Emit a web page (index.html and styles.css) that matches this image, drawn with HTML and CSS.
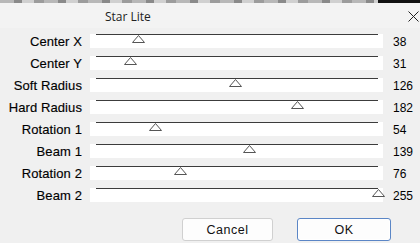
FILE: index.html
```html
<!DOCTYPE html>
<html>
<head>
<meta charset="utf-8">
<link rel="stylesheet" href="styles.css">
</head>
<body>
<div class="strip"><div class="strip-dark"></div></div>
<div class="dialog">
  <div class="titlebar">
    <span class="title">Star Lite</span>
    <svg class="close" width="11" height="11" viewBox="0 0 11 11"><path d="M0.5 0.5 L10.5 10.5 M10.5 0.5 L0.5 10.5" stroke="#222" stroke-width="1"/></svg>
  </div>
  <div class="rows">
    <div class="row"><span class="label">Center X</span><div class="track"><div class="line"></div><svg class="thumb" style="left:calc(6px + 282px * 38 / 255 - 6.5px)" width="13" height="9" viewBox="0 0 13 9"><path d="M6.5 0.5 L12.5 7.5 L0.5 7.5 Z" fill="#fff" stroke="#555"/></svg></div><span class="value">38</span></div>
    <div class="row"><span class="label">Center Y</span><div class="track"><div class="line"></div><svg class="thumb" style="left:calc(6px + 282px * 31 / 255 - 6.5px)" width="13" height="9" viewBox="0 0 13 9"><path d="M6.5 0.5 L12.5 7.5 L0.5 7.5 Z" fill="#fff" stroke="#555"/></svg></div><span class="value">31</span></div>
    <div class="row"><span class="label">Soft Radius</span><div class="track"><div class="line"></div><svg class="thumb" style="left:calc(6px + 282px * 126 / 255 - 6.5px)" width="13" height="9" viewBox="0 0 13 9"><path d="M6.5 0.5 L12.5 7.5 L0.5 7.5 Z" fill="#fff" stroke="#555"/></svg></div><span class="value">126</span></div>
    <div class="row"><span class="label">Hard Radius</span><div class="track"><div class="line"></div><svg class="thumb" style="left:calc(6px + 282px * 182 / 255 - 6.5px)" width="13" height="9" viewBox="0 0 13 9"><path d="M6.5 0.5 L12.5 7.5 L0.5 7.5 Z" fill="#fff" stroke="#555"/></svg></div><span class="value">182</span></div>
    <div class="row"><span class="label">Rotation 1</span><div class="track"><div class="line"></div><svg class="thumb" style="left:calc(6px + 282px * 54 / 255 - 6.5px)" width="13" height="9" viewBox="0 0 13 9"><path d="M6.5 0.5 L12.5 7.5 L0.5 7.5 Z" fill="#fff" stroke="#555"/></svg></div><span class="value">54</span></div>
    <div class="row"><span class="label">Beam 1</span><div class="track"><div class="line"></div><svg class="thumb" style="left:calc(6px + 282px * 139 / 255 - 6.5px)" width="13" height="9" viewBox="0 0 13 9"><path d="M6.5 0.5 L12.5 7.5 L0.5 7.5 Z" fill="#fff" stroke="#555"/></svg></div><span class="value">139</span></div>
    <div class="row"><span class="label">Rotation 2</span><div class="track"><div class="line"></div><svg class="thumb" style="left:calc(6px + 282px * 76 / 255 - 6.5px)" width="13" height="9" viewBox="0 0 13 9"><path d="M6.5 0.5 L12.5 7.5 L0.5 7.5 Z" fill="#fff" stroke="#555"/></svg></div><span class="value">76</span></div>
    <div class="row"><span class="label">Beam 2</span><div class="track"><div class="line"></div><svg class="thumb" style="left:calc(6px + 282px * 255 / 255 - 6.5px)" width="13" height="9" viewBox="0 0 13 9"><path d="M6.5 0.5 L12.5 7.5 L0.5 7.5 Z" fill="#fff" stroke="#555"/></svg></div><span class="value">255</span></div>
  </div>
  <div class="buttons">
    <button class="btn">Cancel</button>
    <button class="btn btn-default">OK</button>
  </div>
</div>
</body>
</html>
```
FILE: styles.css
```css
html, body {
  margin: 0;
  padding: 0;
  background: #f0f0f0;
  width: 420px;
  height: 243px;
  overflow: hidden;
}
.strip {
  height: 3px;
  display: flex;
  background: repeating-linear-gradient(90deg, #b8b8b8 0 14px, #8a8a8a 14px 22px, #d0d0d0 22px 34px, #9c9c9c 34px 44px);
}
.strip-dark {
  margin-left: auto;
  width: 42px;
  background: #111;
}
.dialog {
  font-family: "Liberation Sans", Arial, sans-serif;
  color: #000;
}
.titlebar {
  height: 25px;
  display: flex;
  align-items: center;
  background: #f3f3f3;
}
.title {
  font-family: "Open Sans", "Noto Sans", sans-serif;
  font-size: 12px;
  margin-left: 105px;
  color: #222;
  margin-top: 1px;
}
.close {
  margin-left: auto;
  margin-right: 1px;
  margin-top: 1px;
}
.rows {
  margin-top: 5px;
  display: flex;
  flex-direction: column;
  gap: 8px;
}
.row {
  display: grid;
  grid-template-columns: 82px 293px auto;
  column-gap: 8px;
  height: 14px;
  align-items: center;
}
.label {
  text-align: right;
  font-size: 13px;
  line-height: 14px;
  margin-top: 2px;
  letter-spacing: 0.1px;
  -webkit-text-stroke: 0.15px #000;
}
.track {
  position: relative;
  height: 14px;
  background: #fff;
}
.line {
  position: absolute;
  left: 6px;
  right: 5px;
  top: 0;
  height: 1px;
  background: #3c3c3c;
}
.thumb {
  position: absolute;
  top: 1px;
}
.value {
  font-size: 12px;
  margin-left: 2px;
  margin-top: 2px;
}
.buttons {
  display: flex;
  justify-content: flex-end;
  gap: 24px;
  margin-top: 17px;
  padding-right: 29px;
}
.btn {
  width: 91px;
  height: 23px;
  border: 1px solid #d0d0d0;
  border-radius: 3px;
  background: #fdfdfd;
  font-family: "Liberation Sans", Arial, sans-serif;
  font-size: 12.5px;
  color: #111;
  padding: 0;
  letter-spacing: 0.5px;
}
.btn-default {
  width: 94px;
  border: 1px solid #5b86c6;
  box-shadow: inset 0 0 0 1px #fff;
}
```
